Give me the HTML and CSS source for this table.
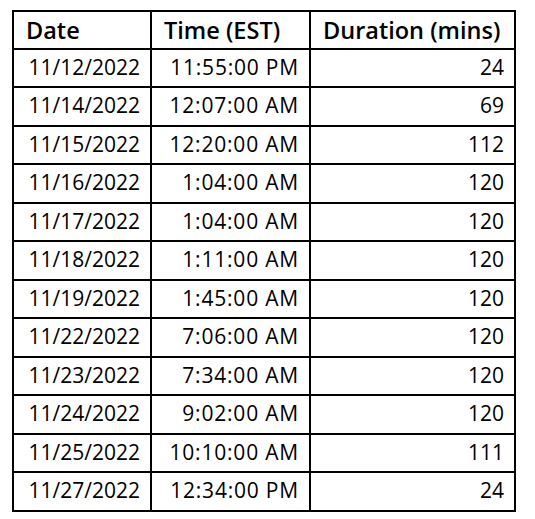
FILE: index.html
```html
<!DOCTYPE html>
<html>
<head>
<meta charset="utf-8">
<link rel="stylesheet" href="styles.css">
</head>
<body>
<table class="log">
  <colgroup>
    <col class="c-date">
    <col class="c-time">
    <col class="c-dur">
  </colgroup>
  <thead>
    <tr><th>Date</th><th>Time (EST)</th><th>Duration (mins)</th></tr>
  </thead>
  <tbody>
    <tr><td>11/12/2022</td><td class="t">11:55:00 PM</td><td>24</td></tr>
    <tr><td>11/14/2022</td><td class="t">12:07:00 AM</td><td>69</td></tr>
    <tr><td>11/15/2022</td><td class="t">12:20:00 AM</td><td>112</td></tr>
    <tr><td>11/16/2022</td><td class="t">1:04:00 AM</td><td>120</td></tr>
    <tr><td>11/17/2022</td><td class="t">1:04:00 AM</td><td>120</td></tr>
    <tr><td>11/18/2022</td><td class="t">1:11:00 AM</td><td>120</td></tr>
    <tr><td>11/19/2022</td><td class="t">1:45:00 AM</td><td>120</td></tr>
    <tr><td>11/22/2022</td><td class="t">7:06:00 AM</td><td>120</td></tr>
    <tr><td>11/23/2022</td><td class="t">7:34:00 AM</td><td>120</td></tr>
    <tr><td>11/24/2022</td><td class="t">9:02:00 AM</td><td>120</td></tr>
    <tr><td>11/25/2022</td><td class="t">10:10:00 AM</td><td>111</td></tr>
    <tr><td>11/27/2022</td><td class="t">12:34:00 PM</td><td>24</td></tr>
  </tbody>
</table>
</body>
</html>
```
FILE: styles.css
```css
html, body {
  margin: 0;
  padding: 0;
  background: #fff;
}
body {
  padding: 10px 0 0 12px;
  font-family: "Open Sans", "Liberation Sans", sans-serif;
  color: #000;
}
.log {
  border-collapse: collapse;
  table-layout: fixed;
  width: 502px;
  border: 2px solid #000;
}
.c-date { width: 138px; }
.c-time { width: 159px; }
.c-dur { width: 205px; }
.log th, .log td {
  border: 2px solid #000;
  line-height: 24px;
  white-space: nowrap;
}
.log th {
  height: 35.5px;
  padding: 0 10px 0 12px;
  text-align: left;
  font-size: 23.5px;
  font-weight: 600;
}
.log td {
  height: 34.5px;
  padding: 0 10px 2px;
  text-align: right;
  font-size: 21px;
}
.log td.t {
  letter-spacing: 0.8px;
}
```
